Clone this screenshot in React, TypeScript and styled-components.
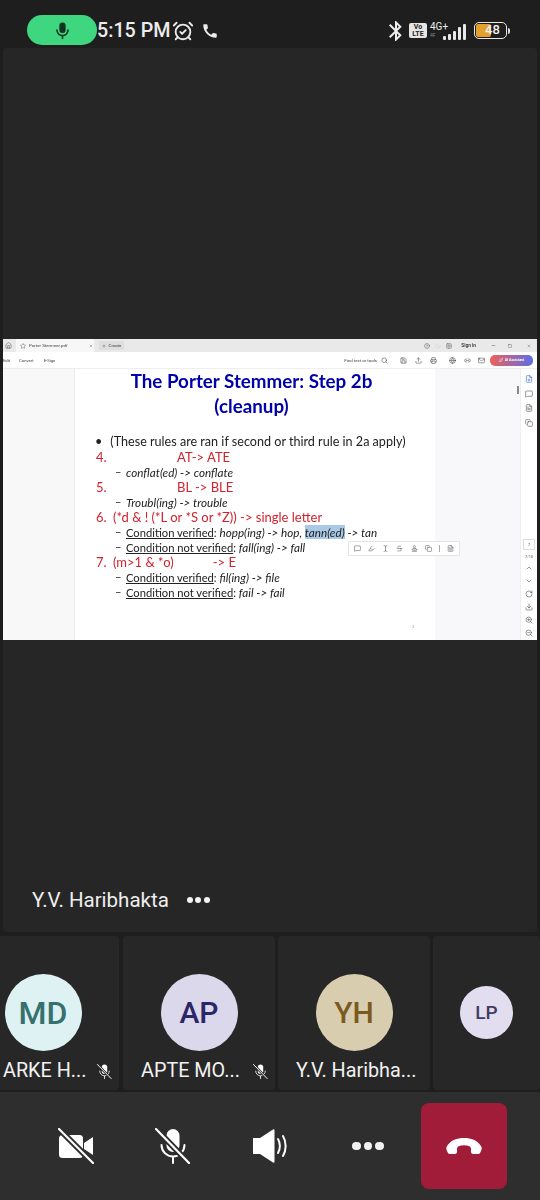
import React from "react";
import styled, { createGlobalStyle } from "styled-components";
import {
  AlarmClockCheck,
  ChevronDown,
  ChevronUp,
  CircleHelp,
  Copy,
  Download,
  FilePlus,
  FileText,
  Globe,
  Grid2x2,
  Highlighter,
  Home,
  Link2,
  Mail,
  MessageSquare,
  Minus,
  Moon,
  Plus,
  Printer,
  RotateCw,
  Save,
  Search,
  Sparkles,
  Square,
  Stamp,
  Star,
  Strikethrough,
  TextCursor,
  Upload,
  X,
  ZoomIn,
  ZoomOut,
} from "lucide-react";
import { MdBluetooth, MdCall } from "react-icons/md";

const GlobalStyle = createGlobalStyle`
  html, body {
    margin: 0;
    background: #1e1e1e;
    font-family: Roboto, "Liberation Sans", sans-serif;
  }
`;

const Page = styled.div`
  width: 540px;
  height: 1200px;
  overflow: hidden;
  display: flex;
  flex-direction: column;
  background: #1e1e1e;
  color: #f2f2f2;
`;

/* status bar */
const StatusBar = styled.div`
  height: 48px;
  flex: none;
  display: flex;
  align-items: flex-start;
  padding: 15px 30px 0 27px;
  box-sizing: border-box;
`;

const MicPill = styled.div`
  width: 70px;
  height: 30px;
  border-radius: 15px;
  background: #3ed67e;
  display: flex;
  align-items: center;
  justify-content: center;
`;

const Clock = styled.div`
  font-size: 19.7px;
  line-height: 31px;
  font-weight: 500;
  color: #ececec;
`;

const StatusLeftIcons = styled.div`
  display: flex;
  align-items: center;
  gap: 7px;
  height: 31px;
  margin-left: 2px;
  color: #ececec;
`;

const StatusRight = styled.div`
  margin-left: auto;
  display: flex;
  align-items: center;
  height: 31px;
  color: #ececec;
`;

const VolteBadge = styled.div`
  width: 18px;
  height: 15px;
  border-radius: 2px;
  background: #e6e6e6;
  color: #222;
  font-size: 7px;
  line-height: 7px;
  font-weight: 700;
  text-align: center;
  padding-top: 1px;
  box-sizing: border-box;
  margin-left: 1px;
`;

const NetworkStack = styled.div`
  display: flex;
  flex-direction: column;
  margin-left: 3px;
  width: 20px;
  font-size: 10px;
  line-height: 10px;
`;

const TinyNet = styled.span`
  font-size: 5px;
  line-height: 7px;
  color: #888;
`;

const SignalBars = styled.div`
  display: flex;
  align-items: flex-end;
  gap: 2px;
  height: 16px;
  margin-left: -7px;
  margin-top: 2px;
`;

const SignalBar = styled.div<{ $h: number }>`
  width: 3px;
  height: ${(p) => p.$h}px;
  background: #e8e8e8;
  border-radius: 1px;
`;

const Battery = styled.div`
  position: relative;
  width: 33px;
  height: 17px;
  margin-left: 8px;
  border: 1.5px solid #e8e8e8;
  border-radius: 5px;
  box-sizing: border-box;
  overflow: hidden;
  font-size: 13px;
  line-height: 14px;
  font-weight: 500;
  text-align: center;
  color: #f2f2f2;
`;

const BatteryFill = styled.div`
  position: absolute;
  left: 1px;
  top: 1px;
  bottom: 1px;
  width: 48%;
  background: #e3a02d;
  border-radius: 2px;
`;

const BatteryLabel = styled.span`
  position: relative;
  left: 2px;
`;

const BatteryCap = styled.div`
  width: 2px;
  height: 6px;
  margin-left: 1px;
  background: #ddd;
  border-radius: 0 2px 2px 0;
`;

/* stage with the shared screen */
const Stage = styled.div`
  height: 884px;
  flex: none;
  margin: 0 3px;
  border-radius: 4px;
  background: #262626;
  display: flex;
  flex-direction: column;
`;

const Share = styled.div`
  position: relative;
  margin-top: 291px;
  height: 301px;
  background: #fff;
  display: flex;
  flex-direction: column;
  overflow: hidden;
  color: #444;
  filter: blur(0.3px);
`;

const TabBar = styled.div`
  height: 13px;
  flex: none;
  display: flex;
  align-items: center;
  background: #e9e9e9;
  font-size: 4.4px;
  padding: 0 6px 0 2px;
`;

const DocTab = styled.div`
  width: 78px;
  height: 13px;
  margin-left: 4px;
  padding: 0 1px 0 4px;
  box-sizing: border-box;
  display: flex;
  align-items: center;
  gap: 3px;
  background: #f7f7f7;
`;

const TabClose = styled.span`
  margin-left: auto;
  display: flex;
`;

const NewTab = styled.div`
  margin-left: 5px;
  height: 9px;
  width: 25px;
  display: flex;
  align-items: center;
  justify-content: center;
  gap: 3px;
  background: #dedede;
  border-radius: 1px;
`;

const WindowControls = styled.div`
  margin-left: auto;
  display: flex;
  align-items: center;
`;

const WindowItem = styled.span<{ $ml: number }>`
  display: flex;
  align-items: center;
  margin-left: ${(p) => p.$ml}px;
`;

const SignIn = styled.span`
  font-size: 4.8px;
  font-weight: 700;
`;

const ToolBar = styled.div`
  height: 17px;
  flex: none;
  display: flex;
  align-items: center;
  font-size: 4.2px;
  border-bottom: 1px solid #eee;
  box-sizing: border-box;
  padding: 0 4px 0 0;
`;

const MenuItem = styled.span<{ $ml: number }>`
  margin-left: ${(p) => p.$ml}px;
`;

const ToolRight = styled.div`
  margin-left: auto;
  display: flex;
  align-items: center;
`;

const FindText = styled.span`
  font-size: 4.4px;
  margin-right: 4px;
`;

const ToolIcon = styled.span<{ $mr: number }>`
  display: flex;
  margin-right: ${(p) => p.$mr}px;
`;

const AiButton = styled.div`
  width: 43px;
  height: 11px;
  border-radius: 5px;
  background: linear-gradient(90deg, #f0605a, #5b6ee8);
  color: #fff;
  font-size: 3.6px;
  font-weight: 700;
  display: flex;
  align-items: center;
  justify-content: center;
  gap: 2px;
`;

const ViewerBody = styled.div`
  flex: 1;
  min-height: 0;
  display: flex;
`;

const Sidebar = styled.div`
  width: 71px;
  flex: none;
  background: #f8f8f8;
  border-right: 1px solid #eee;
  box-sizing: content-box;
`;

const Slide = styled.div`
  width: 360px;
  flex: none;
  box-sizing: border-box;
  background: #fff;
  display: flex;
  flex-direction: column;
  font-family: Lato, "Open Sans", sans-serif;
`;

const SlideTitle = styled.div`
  color: #0000a8;
  font-size: 18.8px;
  line-height: 25px;
  font-weight: 700;
  text-align: center;
  margin: -1px 0 1px -7px;
`;

const RuleList = styled.div`
  margin-top: 15px;
  display: flex;
  flex-direction: column;
`;

const Bullet = styled.div`
  display: flex;
  height: 16px;
  font-size: 12.6px;
  line-height: 16px;
  color: #222;
  padding-left: 20px;
  gap: 8px;
  white-space: nowrap;
`;

const RuleHead = styled.div`
  display: flex;
  height: 15.4px;
  font-size: 13px;
  line-height: 15.4px;
  color: #d3222e;
  padding-left: 21px;
  white-space: nowrap;
`;

const RuleNumber = styled.span`
  width: 17px;
  flex: none;
`;

const RuleFormula = styled.span<{ $ml?: number }>`
  margin-left: ${(p) => p.$ml ?? 0}px;
`;

const SubRow = styled.div`
  display: flex;
  height: 14.8px;
  font-size: 11.2px;
  line-height: 14.8px;
  color: #222;
  padding-left: 40px;
  white-space: nowrap;
  margin-top: -0.6px;
  margin-bottom: 0.6px;
`;

const SubDash = styled.span`
  width: 11px;
  flex: none;
`;

const Condition = styled.span`
  text-decoration: underline;
`;

const Example = styled.span`
  font-style: italic;
  font-size: 11.7px;
`;

const Selected = styled.span`
  background: #a9c9e6;
`;

const PageNumber = styled.div`
  margin-top: 24px;
  padding-left: 337px;
  font-size: 4px;
  color: #999;
`;

const Gutter = styled.div`
  flex: 1;
  background: #f8f8fb;
  position: relative;
`;

const ScrollThumb = styled.div`
  position: absolute;
  right: 1px;
  top: 17px;
  width: 2px;
  height: 8px;
  background: #888;
`;

const Rail = styled.div`
  width: 17px;
  flex: none;
  background: #fff;
  border-left: 1px solid #eee;
  box-sizing: border-box;
  display: flex;
  flex-direction: column;
  align-items: center;
  justify-content: space-between;
  color: #555;
  padding: 6px 0 3px;
`;

const RailGroup = styled.div<{ $gap: number }>`
  display: flex;
  flex-direction: column;
  align-items: center;
  gap: ${(p) => p.$gap}px;
`;

const PageBox = styled.div`
  width: 12px;
  height: 11px;
  border: 1px solid #ddd;
  box-sizing: border-box;
  font-size: 4px;
  line-height: 9px;
  text-align: center;
`;

const PageTotal = styled.div`
  font-size: 3.8px;
  line-height: 4px;
`;

const FloatBar = styled.div`
  position: absolute;
  left: 345px;
  top: 202px;
  width: 112px;
  height: 15px;
  box-sizing: border-box;
  background: #fff;
  border: 1px solid #e4e4e4;
  border-radius: 1px;
  display: flex;
  align-items: center;
  justify-content: space-between;
  padding: 0 5px;
  color: #555;
`;

const FloatDivider = styled.span`
  width: 1px;
  height: 7px;
  background: #aaa;
`;

const SpeakerName = styled.div`
  margin-top: auto;
  height: 47px;
  padding-left: 29px;
  display: flex;
  align-items: flex-start;
  gap: 18px;
  font-size: 20.5px;
  line-height: 30px;
  color: #eee;
`;

const Dots = styled.span<{ $gap: number }>`
  display: flex;
  gap: ${(p) => p.$gap}px;
  height: 30px;
  align-items: center;
`;

const Dot = styled.span<{ $s: number }>`
  width: ${(p) => p.$s}px;
  height: ${(p) => p.$s}px;
  border-radius: 50%;
  background: #f2f2f2;
`;

/* participants row */
const TileRow = styled.div`
  margin-top: 4px;
  height: 154px;
  flex: none;
  display: flex;
  gap: 3px;
  overflow: hidden;
`;

const Tile = styled.div<{ $w: number; $ml?: number }>`
  width: ${(p) => p.$w}px;
  flex: none;
  margin-left: ${(p) => p.$ml ?? 0}px;
  border-radius: 4px;
  background: #272727;
  display: flex;
  flex-direction: column;
  align-items: center;
  padding-top: 38px;
  box-sizing: border-box;
`;

const Avatar = styled.div<{ $bg: string; $fg: string; $s: number; $fs: number }>`
  width: ${(p) => p.$s}px;
  height: ${(p) => p.$s}px;
  margin-top: ${(p) => (77 - p.$s) / 2}px;
  border-radius: 50%;
  background: ${(p) => p.$bg};
  color: ${(p) => p.$fg};
  font-size: ${(p) => p.$fs}px;
  font-weight: 500;
  display: flex;
  align-items: center;
  justify-content: center;
  flex: none;
`;

const TileLabel = styled.div<{ $pl: number }>`
  align-self: stretch;
  margin-top: 5px;
  padding-left: ${(p) => p.$pl}px;
  display: flex;
  align-items: center;
  justify-content: space-between;
  padding-right: 7px;
  font-size: 19.8px;
  line-height: 30px;
  color: #f2f2f2;
  white-space: nowrap;
`;

/* call controls */
const Controls = styled.div`
  margin-top: 2px;
  flex: 1;
  background: #2e2e2e;
  display: grid;
  grid-template-columns: repeat(4, 97.4px) 86px;
  padding: 11px 0 11px 27px;
  align-items: center;
  box-sizing: border-box;
`;

const ControlButton = styled.div`
  display: flex;
  justify-content: center;
  align-items: center;
  height: 86px;
`;

const HangUp = styled.div`
  width: 86px;
  height: 86px;
  margin-left: 4px;
  border-radius: 8px;
  background: #a01c38;
  display: flex;
  align-items: center;
  justify-content: center;
`;

const MicGlyph = ({ size, color }: { size: number; color: string }) => (
  <svg width={size} height={size} viewBox="0 0 24 24" fill="none" stroke={color} strokeWidth="2" strokeLinecap="round">
    <rect x="8" y="2" width="8" height="13" rx="4" fill={color} stroke="none" />
    <path d="M5 11.5a7 7 0 0 0 14 0M12 18.5V22" />
  </svg>
);

const MutedMic = ({ size }: { size: number }) => (
  <svg width={size} height={size} viewBox="0 0 36 36" fill="none" stroke="#fff" strokeLinecap="round">
    <rect x="11.5" y="1" width="13" height="23" rx="6.5" fill="#fff" stroke="none" />
    <path d="M6.5 17a11.5 11.5 0 0 0 23 0M18 29v6" strokeWidth="2" />
    <path d="M1 1l33 34" stroke="#2e2e2e" strokeWidth="6" />
    <path d="M1 1l33 34" strokeWidth="2.2" />
  </svg>
);

const MutedVideo = () => (
  <svg width="36" height="36" viewBox="0 0 36 36" fill="none" stroke="#fff" strokeLinecap="round">
    <rect x="1" y="7" width="24" height="23" rx="3.5" fill="#fff" stroke="none" />
    <path d="M26 15l9-6v18l-9-6z" fill="#fff" stroke="none" />
    <path d="M1 1l34 34" stroke="#2e2e2e" strokeWidth="6" />
    <path d="M1 1l34 34" strokeWidth="2.2" />
  </svg>
);

const Speaker = () => (
  <svg width="36" height="36" viewBox="0 0 36 36" fill="#fff" stroke="none">
    <path d="M1 10h7L21 1.500c.7-.4 1.500 0 1.500.8v31.400c0 .8-.8 1.200-1.500.8L8 26H1z" />
    <path d="M26 11c2.500 4 2.500 10 0 14M31 8c3.500 6 3.500 14 0 20" fill="none" stroke="#fff" strokeWidth="2" strokeLinecap="round" />
  </svg>
);

const Handset = () => (
  <svg width="36" height="16" viewBox="0 0 36 16" fill="#fff">
    <path d="M1 8C5 2 11 0 18 0s13 2 17 8c1 1.500 1 3 0 5l-1 2c-.6 1-1.500 1-2.500 1H27c-1 0-2-.8-2-2v-3c0-1.500-.8-2.500-2-3-3-1-7-1-10 0-1.200.5-2 1.500-2 3v3c0 1.200-1 2-2 2H4.500C3.500 16 2.600 16 2 15l-1-2C0 11 0 9.500 1 8z" />
  </svg>
);

const tiny = { size: 6, strokeWidth: 1.6 };
const tool = { size: 7, strokeWidth: 1.8 };
const rail = { size: 8, strokeWidth: 1.8 };

const App: React.FC = () => (
  <Page>
    <GlobalStyle />
    <StatusBar>
      <MicPill>
        <MicGlyph size={19} color="#10331f" />
      </MicPill>
      <Clock>5:15 PM</Clock>
      <StatusLeftIcons>
        <AlarmClockCheck size={22} strokeWidth={2} />
        <MdCall size={18} />
      </StatusLeftIcons>
      <StatusRight>
        <MdBluetooth size={24} />
        <VolteBadge>
          Vo
          <br />
          LTE
        </VolteBadge>
        <NetworkStack>
          4G+
          <TinyNet>4F</TinyNet>
        </NetworkStack>
        <SignalBars>
          <SignalBar $h={4} />
          <SignalBar $h={6} />
          <SignalBar $h={9} />
          <SignalBar $h={13} />
          <SignalBar $h={16} />
        </SignalBars>
        <Battery>
          <BatteryFill />
          <BatteryLabel>48</BatteryLabel>
        </Battery>
        <BatteryCap />
      </StatusRight>
    </StatusBar>

    <Stage>
      <Share>
        <TabBar>
          <Home {...tiny} size={7} />
          <DocTab>
            <Star {...tiny} />
            Porter Stemmer.pdf
            <TabClose>
              <X size={4} strokeWidth={2} />
            </TabClose>
          </DocTab>
          <NewTab>
            <Plus size={4} strokeWidth={2} />
            Create
          </NewTab>
          <WindowControls>
            <CircleHelp {...tiny} />
            <WindowItem $ml={5}>
              <Moon {...tiny} color="#ccc" />
            </WindowItem>
            <WindowItem $ml={5}>
              <Grid2x2 {...tiny} />
            </WindowItem>
            <WindowItem $ml={9}>
              <SignIn>Sign in</SignIn>
            </WindowItem>
            <WindowItem $ml={15}>
              <Minus size={5} strokeWidth={2} />
            </WindowItem>
            <WindowItem $ml={12}>
              <Square size={4} strokeWidth={2} />
            </WindowItem>
            <WindowItem $ml={15}>
              <X size={4} strokeWidth={2} />
            </WindowItem>
          </WindowControls>
        </TabBar>
        <ToolBar>
          <span>Edit</span>
          <MenuItem $ml={9}>Convert</MenuItem>
          <MenuItem $ml={10}>E-Sign</MenuItem>
          <ToolRight>
            <FindText>Find text or tools</FindText>
            <ToolIcon $mr={12}>
              <Search {...tool} />
            </ToolIcon>
            <ToolIcon $mr={8}>
              <Save {...tool} />
            </ToolIcon>
            <ToolIcon $mr={8}>
              <Upload {...tool} />
            </ToolIcon>
            <ToolIcon $mr={12}>
              <Printer {...tool} />
            </ToolIcon>
            <ToolIcon $mr={8}>
              <Globe {...tool} />
            </ToolIcon>
            <ToolIcon $mr={7}>
              <Link2 {...tool} />
            </ToolIcon>
            <ToolIcon $mr={5}>
              <Mail {...tool} />
            </ToolIcon>
            <AiButton>
              <Sparkles size={4} strokeWidth={2} />
              AI Assistant
            </AiButton>
          </ToolRight>
        </ToolBar>
        <ViewerBody>
          <Sidebar />
          <Slide>
            <SlideTitle>The Porter Stemmer: Step 2b</SlideTitle>
            <SlideTitle>(cleanup)</SlideTitle>
            <RuleList>
              <Bullet>
                <span>•</span>
                <span>(These rules are ran if second or third rule in 2a apply)</span>
              </Bullet>
              <RuleHead>
                <RuleNumber>4.</RuleNumber>
                <RuleFormula $ml={64}>AT-&gt; ATE</RuleFormula>
              </RuleHead>
              <SubRow>
                <SubDash>–</SubDash>
                <Example>conflat(ed) -&gt; conflate</Example>
              </SubRow>
              <RuleHead>
                <RuleNumber>5.</RuleNumber>
                <RuleFormula $ml={64}>BL -&gt; BLE</RuleFormula>
              </RuleHead>
              <SubRow>
                <SubDash>–</SubDash>
                <Example>Troubl(ing) -&gt; trouble</Example>
              </SubRow>
              <RuleHead>
                <RuleNumber>6.</RuleNumber>
                <RuleFormula>(*d &amp; ! (*L or *S or *Z)) -&gt; single letter</RuleFormula>
              </RuleHead>
              <SubRow>
                <SubDash>–</SubDash>
                <span>
                  <Condition>Condition verified</Condition>:{" "}
                  <Example>
                    hopp(ing) -&gt; hop, <Selected>tann(ed)</Selected> -&gt; tan
                  </Example>
                </span>
              </SubRow>
              <SubRow>
                <SubDash>–</SubDash>
                <span>
                  <Condition>Condition not verified</Condition>: <Example>fall(ing) -&gt; fall</Example>
                </span>
              </SubRow>
              <RuleHead>
                <RuleNumber>7.</RuleNumber>
                <RuleFormula>(m&gt;1 &amp; *o)</RuleFormula>
                <RuleFormula $ml={39}>-&gt; E</RuleFormula>
              </RuleHead>
              <SubRow>
                <SubDash>–</SubDash>
                <span>
                  <Condition>Condition verified</Condition>: <Example>fil(ing) -&gt; file</Example>
                </span>
              </SubRow>
              <SubRow>
                <SubDash>–</SubDash>
                <span>
                  <Condition>Condition not verified</Condition>: <Example>fail -&gt; fail</Example>
                </span>
              </SubRow>
            </RuleList>
            <PageNumber>2</PageNumber>
          </Slide>
          <Gutter>
            <ScrollThumb />
          </Gutter>
          <Rail>
            <RailGroup $gap={6.5}>
              <FilePlus {...rail} color="#3b63c9" />
              <MessageSquare {...rail} />
              <FileText {...rail} />
              <Copy {...rail} />
            </RailGroup>
            <RailGroup $gap={5}>
              <PageBox>7</PageBox>
              <PageTotal>7/10</PageTotal>
              <ChevronUp {...rail} />
              <ChevronDown {...rail} />
              <RotateCw {...rail} />
              <Download {...rail} />
              <ZoomIn {...rail} />
              <ZoomOut {...rail} />
            </RailGroup>
          </Rail>
        </ViewerBody>
        <FloatBar>
          <MessageSquare {...tool} />
          <Highlighter {...tool} />
          <TextCursor {...tool} />
          <Strikethrough {...tool} />
          <Stamp {...tool} />
          <Copy {...tool} />
          <FloatDivider />
          <FileText {...tool} />
        </FloatBar>
      </Share>
      <SpeakerName>
        Y.V. Haribhakta
        <Dots $gap={2.5}>
          <Dot $s={6} />
          <Dot $s={6} />
          <Dot $s={6} />
        </Dots>
      </SpeakerName>
    </Stage>

    <TileRow>
      <Tile $w={152} $ml={-33}>
        <Avatar $bg="#def1f3" $fg="#36716f" $s={77} $fs={32}>
          MD
        </Avatar>
        <TileLabel $pl={36}>
          ARKE H...
          <MutedMic size={15} />
        </TileLabel>
      </Tile>
      <Tile $w={152} $ml={1}>
        <Avatar $bg="#dbd8ec" $fg="#2b2668" $s={77} $fs={30}>
          AP
        </Avatar>
        <TileLabel $pl={18}>
          APTE MO...
          <MutedMic size={15} />
        </TileLabel>
      </Tile>
      <Tile $w={152}>
        <Avatar $bg="#d9cdb0" $fg="#7a5a1e" $s={77} $fs={30}>
          YH
        </Avatar>
        <TileLabel $pl={18}>Y.V. Haribha...</TileLabel>
      </Tile>
      <Tile $w={107}>
        <Avatar $bg="#e2deef" $fg="#3f3a62" $s={53} $fs={19}>
          LP
        </Avatar>
      </Tile>
    </TileRow>

    <Controls>
      <ControlButton>
        <MutedVideo />
      </ControlButton>
      <ControlButton>
        <MutedMic size={36} />
      </ControlButton>
      <ControlButton>
        <Speaker />
      </ControlButton>
      <ControlButton>
        <Dots $gap={3}>
          <Dot $s={8.5} />
          <Dot $s={8.5} />
          <Dot $s={8.5} />
        </Dots>
      </ControlButton>
      <HangUp>
        <Handset />
      </HangUp>
    </Controls>
  </Page>
);

export default App;
